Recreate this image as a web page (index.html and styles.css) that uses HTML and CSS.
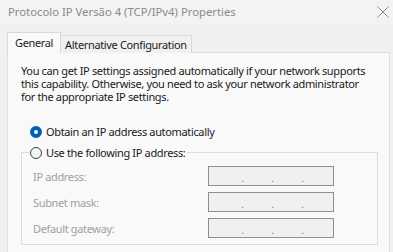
FILE: index.html
```html
<!DOCTYPE html>
<html>
<head>
<meta charset="utf-8">
<link rel="stylesheet" href="styles.css">
</head>
<body>
<div class="window">
  <div class="titlebar">
    <span class="title">Protocolo IP Versão 4 (TCP/IPv4) Properties</span>
    <svg class="close" width="12" height="12" viewBox="0 0 12 12"><path d="M0.5 0.5L11.5 11.5M11.5 0.5L0.5 11.5" stroke="#8c8c8c" stroke-width="1" fill="none"/></svg>
  </div>
  <div class="tabs">
    <div class="tab active">General</div>
    <div class="tab">Alternative Configuration</div>
  </div>
  <div class="panel">
    <p class="intro">You can get IP settings assigned automatically if your network supports<br>this capability. Otherwise, you need to ask your network administrator<br>for the appropriate IP settings.</p>
    <div class="radio-row">
      <span class="radio checked"></span>
      <span>Obtain an IP address automatically</span>
    </div>
    <fieldset class="group">
      <legend class="radio-row legend"><span class="radio"></span><span>Use the following IP address:</span></legend>
      <div class="field">
        <span class="label">IP address:</span>
        <div class="ipbox"><span>.</span><span>.</span><span>.</span></div>
      </div>
      <div class="field">
        <span class="label">Subnet mask:</span>
        <div class="ipbox"><span>.</span><span>.</span><span>.</span></div>
      </div>
      <div class="field">
        <span class="label">Default gateway:</span>
        <div class="ipbox"><span>.</span><span>.</span><span>.</span></div>
      </div>
    </fieldset>
  </div>
</div>
</body>
</html>
```
FILE: styles.css
```css
* { box-sizing: border-box; }
html, body { margin: 0; padding: 0; }
body {
  background: #f0f0f0;
  font-family: "Noto Sans", "Open Sans", sans-serif;
  font-size: 11px;
  letter-spacing: -0.35px;
  color: #1a1a1a;
  width: 393px;
  height: 252px;
  overflow: hidden;
}
.titlebar {
  height: 25px;
  background: #f3f3f3;
  display: flex;
  align-items: center;
  justify-content: space-between;
  padding: 0 4px 2px 8px;
}
.title {
  color: #8a8a8a;
  font-size: 11.3px;
  letter-spacing: 0;
}
.tabs {
  display: flex;
  align-items: flex-end;
  margin-left: 7px;
  height: 27px;
}
.tab {
  border: 1px solid #d9d9d9;
  border-bottom: none;
  background: #f0f0f0;
  height: 18px;
  padding: 0 4px 0 4px;
  line-height: 17px;
  position: relative;
  top: 1px;
}
.tab.active {
  background: #f9f9f9;
  height: 21px;
  padding: 0 7px 0 7px;
  line-height: 19px;
  border-right: 1px solid #d9d9d9;
  z-index: 1;
}
.tab + .tab { border-left: none; }
.panel {
  margin: 0 3px 0 7px;
  height: 210px;
  background: #f9f9f9;
  border: 1px solid #dedede;
  padding: 11px 12px 0 13px;
}
.intro {
  margin: 0;
  line-height: 13px;
  white-space: nowrap;
}
.radio-row {
  display: flex;
  align-items: center;
  gap: 4px;
}
.panel > .radio-row {
  margin: 21px 0 0 9px;
}
.radio {
  width: 12px;
  height: 12px;
  border-radius: 50%;
  border: 1px solid #404040;
  background: #f5f5f5;
  flex: none;
}
.radio.checked {
  border: 4px solid #005fb8;
  background: #ffffff;
}
.group {
  margin: 0;
  margin-top: 6px;
  width: 357px;
  height: 100px;
  border: 1px solid #dcdcdc;
  padding: 0 0 0 11px;
}
.legend {
  margin-left: -4px;
  padding: 0 2px 0 1px;
}
.field {
  display: flex;
  align-items: center;
  height: 20px;
  margin-top: 6px;
}
.field:first-of-type { margin-top: 6px; }
.label {
  color: #a0a0a0;
  width: 175px;
}
.ipbox {
  width: 126px;
  height: 20px;
  border: 1px solid #8f8f8f;
  background: #f0f0f0;
  display: flex;
  padding: 0 0 0 30px;
  gap: 23px;
  line-height: 22px;
  color: #6a8aa0;
  font-size: 10px;
  letter-spacing: 0;
}
.ipbox span { width: 7px; text-align: center; }
```
